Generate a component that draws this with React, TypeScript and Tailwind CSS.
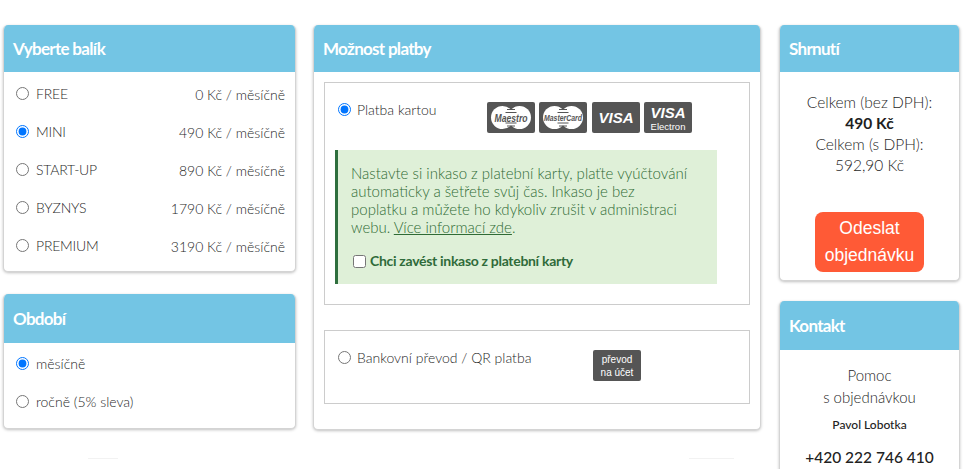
import React from 'react';

const plans = [
    { name: 'FREE', price: '0 Kč / měsíčně' },
    { name: 'MINI', price: '490 Kč / měsíčně', checked: true },
    { name: 'START-UP', price: '890 Kč / měsíčně' },
    { name: 'BYZNYS', price: '1790 Kč / měsíčně' },
    { name: 'PREMIUM', price: '3190 Kč / měsíčně' },
];

const Card: React.FC<{ title: string; headerClass?: string; className?: string; children: React.ReactNode }> = ({ title, headerClass = 'h-[47px]', className = '', children }) => (
    <div className={`bg-white rounded-[5px] border border-[#d4d4d4] border-t-0 shadow-[0_1px_3px_rgba(0,0,0,0.25)] overflow-hidden ${className}`}>
        <div className={`bg-[#73c5e4] flex items-center pl-[9px] text-white text-[17px] font-bold tracking-[-0.7px] ${headerClass}`}>{title}</div>
        {children}
    </div>
);

const CardLogo: React.FC<{ children: React.ReactNode }> = ({ children }) => (
    <svg width="48" height="31" viewBox="0 0 48 31" className="block">
        <rect width="48" height="31" rx="2" fill="#555555" />
        {children}
    </svg>
);

const logoFont = '"Liberation Sans", Arial, sans-serif';

const Circles = () => (
    <>
        <circle cx="15.5" cy="15.5" r="11.5" fill="#fff" />
        <circle cx="32.5" cy="15.5" r="11.5" fill="#fff" />
        <path d="M20 7.5h8M18.5 10.5h11M18.5 21h11M20 24h8" stroke="#555" strokeWidth="1" />
    </>
);

export default function App() {
    return (
        <div className="h-[469px] w-[969px] overflow-hidden bg-white flex items-start pl-[3px] pt-[25px] text-[14px] font-light text-[#1f1f1f] font-['Lato','Open_Sans',sans-serif]">
            {/* Left column */}
            <div className="w-[293px] shrink-0 flex flex-col gap-[22px]">
                <Card title="Vyberte balík" className="h-[247px]">
                    <div className="pt-[3px] pl-[12px] pr-[10px]">
                        {plans.map((plan) => (
                            <label key={plan.name} className="h-[38px] flex items-center justify-between">
                                <span className="flex items-center gap-[7px] -mt-[1px]">
                                    <input type="radio" name="plan" defaultChecked={plan.checked} className="m-0 w-[13px] h-[13px]" />
                                    <span className="tracking-[-0.2px]">{plan.name}</span>
                                </span>
                                <span className="mt-[1px]">{plan.price}</span>
                            </label>
                        ))}
                    </div>
                </Card>
                <Card title="Období" headerClass="h-[49px]" className="h-[135px]">
                    <div className="pt-[1px] px-[12px]">
                        <label className="h-[38px] flex items-center gap-[7px]">
                            <input type="radio" name="period" defaultChecked className="m-0 w-[13px] h-[13px]" />
                            <span>měsíčně</span>
                        </label>
                        <label className="h-[38px] flex items-center gap-[7px]">
                            <input type="radio" name="period" className="m-0 w-[13px] h-[13px]" />
                            <span>ročně (5% sleva)</span>
                        </label>
                    </div>
                </Card>
                <div className="h-px w-[30px] ml-[85px] mt-[7px] bg-[#f2f2f2]" />
            </div>

            {/* Payment */}
            <div className="w-[448px] ml-[17px] shrink-0">
                <Card title="Možnost platby" className="h-[405px]">
                    <div className="px-[10px] pt-[10px]">
                        <div className="border border-[#cccccc] h-[223px] pl-[10px] pt-[19px]">
                            <div className="flex items-start h-[48px]">
                                <label className="flex items-center gap-[6px] w-[152px] pl-[3px] -mt-[3px]">
                                    <input type="radio" name="pay" defaultChecked className="m-0 w-[13px] h-[13px]" />
                                    <span>Platba kartou</span>
                                </label>
                                <div className="flex gap-[4px]">
                                    <CardLogo>
                                        <Circles />
                                        <text x="24" y="19.5" textAnchor="middle" fontSize="11" fontWeight="700" fontStyle="italic" fill="#555" fontFamily={logoFont} textLength="33" lengthAdjust="spacingAndGlyphs">Maestro</text>
                                    </CardLogo>
                                    <CardLogo>
                                        <Circles />
                                        <text x="24" y="18.5" textAnchor="middle" fontSize="9" fontWeight="700" fontStyle="italic" fill="#555" fontFamily={logoFont} textLength="38" lengthAdjust="spacingAndGlyphs">MasterCard</text>
                                    </CardLogo>
                                    <div className="ml-[1px]">
                                        <CardLogo>
                                            <text x="24" y="21" textAnchor="middle" fontSize="15" fontWeight="700" fontStyle="italic" fill="#fff" fontFamily={logoFont}>VISA</text>
                                        </CardLogo>
                                    </div>
                                    <CardLogo>
                                        <text x="24" y="16" textAnchor="middle" fontSize="15" fontWeight="700" fontStyle="italic" fill="#fff" fontFamily={logoFont}>VISA</text>
                                        <text x="24" y="27.5" textAnchor="middle" fontSize="9.5" fill="#fff" fontFamily={logoFont}>Electron</text>
                                    </CardLogo>
                                </div>
                            </div>
                            <div className="w-[382px] h-[134px] bg-[#dff0d8] border-l-[3px] border-[#2f6f3e] pl-[13px] pt-[14px] text-[#2f6b35] text-[15px] leading-[18px]">
                                <p className="w-[343px]">
                                    Nastavte si inkaso z platební karty, plaťte vyúčtování automaticky a šetřete svůj čas. Inkaso je bez poplatku a můžete ho kdykoliv zrušit v administraci webu. <a href="#" className="underline">Více informací zde</a>.
                                </p>
                                <label className="flex items-center gap-[4px] mt-[16px] pl-[2px] text-[14px] font-bold text-[#2f6b3a] tracking-[-0.3px]">
                                    <input type="checkbox" className="m-0 w-[13px] h-[13px]" />
                                    <span>Chci zavést inkaso z platební karty</span>
                                </label>
                            </div>
                        </div>
                        <div className="border border-[#cccccc] h-[74px] mt-[25px] pl-[13px] pt-[19px] flex items-start">
                            <label className="flex items-center gap-[6px] w-[255px] -mt-[3px]">
                                <input type="radio" name="pay" className="m-0 w-[13px] h-[13px]" />
                                <span>Bankovní převod / QR platba</span>
                            </label>
                            <div className="w-[48px] h-[31px] bg-[#555] rounded-[2px] text-white text-[10px] leading-[13px] text-center pt-[3px] font-normal font-['Liberation_Sans',Arial,sans-serif]">
                                převod<br />na účet
                            </div>
                        </div>
                    </div>
                </Card>
                <div className="h-px w-[45px] ml-[376px] mt-[28px] bg-[#f2f2f2]" />
            </div>

            {/* Right column */}
            <div className="w-[181px] ml-[18px] shrink-0 flex flex-col gap-[20px]">
                <Card title="Shrnutí" className="h-[256px]">
                    <div className="text-center text-[15.5px] leading-[21px] pt-[20px]">
                        <div>Celkem (bez DPH):</div>
                        <div className="font-bold">490 Kč</div>
                        <div>Celkem (s DPH):</div>
                        <div>592,90 Kč</div>
                        <button className="mt-[36px] w-[109px] h-[60px] rounded-[8px] bg-[#ff5a36] text-white text-[17.5px] leading-[27px] font-normal font-['Liberation_Sans',Arial,sans-serif]">
                            Odeslat objednávku
                        </button>
                    </div>
                </Card>
                <Card title="Kontakt" headerClass="h-[49px]" className="h-[220px]">
                    <div className="text-center pt-[14px]">
                        <div className="text-[15px] leading-[22px]">Pomoc<br />s objednávkou</div>
                        <div className="text-[12px] font-medium mt-[7px] leading-[20px] text-[#222]">Pavol Lobotka</div>
                        <div className="text-[15.5px] font-medium mt-[10px] leading-[24px] text-[#222]">+420 222 746 410</div>
                    </div>
                </Card>
            </div>
        </div>
    );
}
